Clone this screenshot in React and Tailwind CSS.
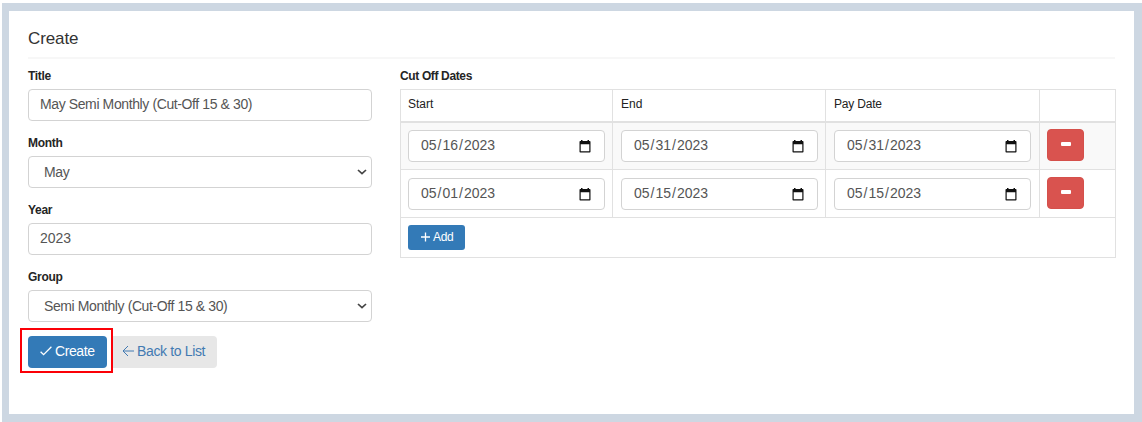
import React from "react";

const rows = [
  ["05/16/2023", "05/31/2023", "05/31/2023"],
  ["05/01/2023", "05/15/2023", "05/15/2023"],
];

function Chevron() {
  return (
    <svg width="10" height="6" viewBox="0 0 10 6" fill="none" stroke="#444" strokeWidth="1.7">
      <path d="M1 1l4 3.7L9 1" />
    </svg>
  );
}

function Calendar() {
  return (
    <svg width="12" height="13" viewBox="0 0 12 13">
      <path
        fill="#111"
        fillRule="evenodd"
        d="M2 0h1.5v1h5V0H10v1h.7c.5 0 .8.4.8.8v9.9c0 .5-.3.8-.8.8H1.3a.8.8 0 0 1-.8-.8V1.8c0-.4.3-.8.8-.8H2zM1.7 4.2v7.1h8.6V4.2z"
      />
    </svg>
  );
}

function Field({ label, value, select, numeric }) {
  return (
    <div className="h-[67px]">
      <div className="h-[22px] text-[12px] leading-[18px] font-bold tracking-[-0.3px] text-[#252525]">{label}</div>
      <div
        className={
          "flex h-8 items-center justify-between rounded-[4px] border border-[#d3d3d3] bg-white text-[14px] leading-5 text-[#555] " +
          (select ? "pr-[4px] pb-px pl-[15px] " : "px-[11px] pb-[3px] ") +
          (numeric ? "" : "tracking-[-0.39px]")
        }
      >
        <span className="whitespace-pre">{value}</span>
        {select && <Chevron />}
      </div>
    </div>
  );
}

function DateInput({ value }) {
  return (
    <div className="flex h-8 w-[197px] items-center justify-between rounded-[4px] border border-[#d3d3d3] bg-white pr-[13px] pl-3 text-[14px] text-[#555]">
      <span className="pb-[2px] leading-5">
        {value.slice(0, 2)}
        <span className="px-px">/</span>
        {value.slice(3, 5)}
        <span className="px-px">/</span>
        {value.slice(6)}
      </span>
      <Calendar />
    </div>
  );
}

const grid = "grid grid-cols-[212px_213px_214px_76px]";
const cell = "border-r border-[#e1e1e1] ";

export default function App() {
  return (
    <div className="h-[422px] w-[1142px] bg-white pt-[3px] pl-[2px] font-['Liberation_Sans',Arial,sans-serif]">
      <div className="h-[419px] bg-[#cdd7e2] pt-2 pr-2 pb-2 pl-[7px]">
        <main className="h-[403px] bg-white px-[19px] pt-[17px]">
          <h1 className="h-[31px] w-[1087px] border-b-2 border-[#f7f7f7] text-[17px] leading-[22px] tracking-[-0.1px] text-[#333]">
            Create
          </h1>
          <div className="flex pt-2">
            <section className="w-[344px] shrink-0">
              <div className="flex flex-col">
                <Field label="Title" value="May Semi Monthly (Cut-Off 15 & 30)" />
                <Field label="Month" value="May" select />
                <Field label="Year" value="2023" numeric />
                <Field label="Group" value="Semi Monthly (Cut-Off 15 & 30)" select />
              </div>
              <div className="-mt-[7px] -ml-2 flex items-start">
                <div className="flex h-[45px] w-[93px] items-start border-2 border-[#fb0007] pt-[6px] pl-[6px]">
                  <button className="flex h-8 w-[79px] items-center rounded-[4px] bg-[#337ab7] pb-[2px] pl-3 text-[14px] leading-5 tracking-[-0.4px] text-white">
                    <svg className="mr-[3px]" width="12" height="10" viewBox="0 0 12 10" fill="none" stroke="currentColor" strokeWidth="1.3">
                      <path d="M.6 5.7l3 3L11.4.8" />
                    </svg>
                    Create
                  </button>
                </div>
                <button className="mt-2 flex h-8 w-[104px] items-center rounded-r-[4px] bg-[#e7e7e7] pb-[2px] pl-[9px] text-[14px] leading-5 tracking-[-0.36px] whitespace-nowrap text-[#427ab2]">
                  <svg className="mr-[3px]" width="12" height="12" viewBox="0 0 12 12" fill="none" stroke="currentColor" strokeWidth="1">
                    <path d="M6 1L1 6l5 5M1 6h11" />
                  </svg>
                  Back to List
                </button>
              </div>
            </section>
            <section className="ml-7 w-[716px] shrink-0">
              <div className="h-[22px] text-[12px] leading-[18px] font-bold tracking-[-0.36px] text-[#252525]">Cut Off Dates</div>
              <div className="border-t border-l border-[#e1e1e1]">
                <div className={grid + " h-[33px] border-b-2 border-[#e1e1e1] text-[12px] leading-[29px] text-[#222]"}>
                  <div className={cell + "pl-[7px]"}>Start</div>
                  <div className={cell + "pl-2"}>End</div>
                  <div className={cell + "pl-2 tracking-[-0.2px]"}>Pay Date</div>
                  <div className={cell} />
                </div>
                {rows.map((dates, i) => (
                  <div
                    key={i}
                    className={grid + " border-b border-[#e1e1e1] " + (i === 0 ? "h-[47px] bg-[#f9f9f9]" : "h-12 bg-white")}
                  >
                    {dates.map((date, j) => (
                      <div key={j} className={"flex items-start border-r border-[#e1e1e1] " + (j ? "pl-2 " : "pl-[7px] ") + (i ? "pt-2" : "pt-[7px]")}>
                        <DateInput value={date} />
                      </div>
                    ))}
                    <div className={"flex items-start border-r border-[#e1e1e1] pl-[7px] " + (i ? "pt-[7px]" : "pt-[6px]")}>
                      <button className="flex h-8 w-[37px] items-center justify-center rounded-[4px] border border-[#d5504b] bg-[#d9534f]">
                        <span className="mb-[2px] h-1 w-[10px] rounded-[1px] bg-white" />
                      </button>
                    </div>
                  </div>
                ))}
                <div className="flex h-10 items-start border-r border-b border-[#e1e1e1] pt-[7px] pl-[7px]">
                  <button className="flex h-[25px] w-[57px] items-center rounded-[3px] bg-[#337ab7] pb-px pl-[13px] text-[12px] leading-4 tracking-[-0.3px] text-white">
                    <svg className="mr-[3px]" width="9" height="10" viewBox="0 0 9 10" fill="none" stroke="currentColor" strokeWidth="1.3">
                      <path d="M4.5 .5v9M0 5h9" />
                    </svg>
                    Add
                  </button>
                </div>
              </div>
            </section>
          </div>
        </main>
      </div>
    </div>
  );
}
